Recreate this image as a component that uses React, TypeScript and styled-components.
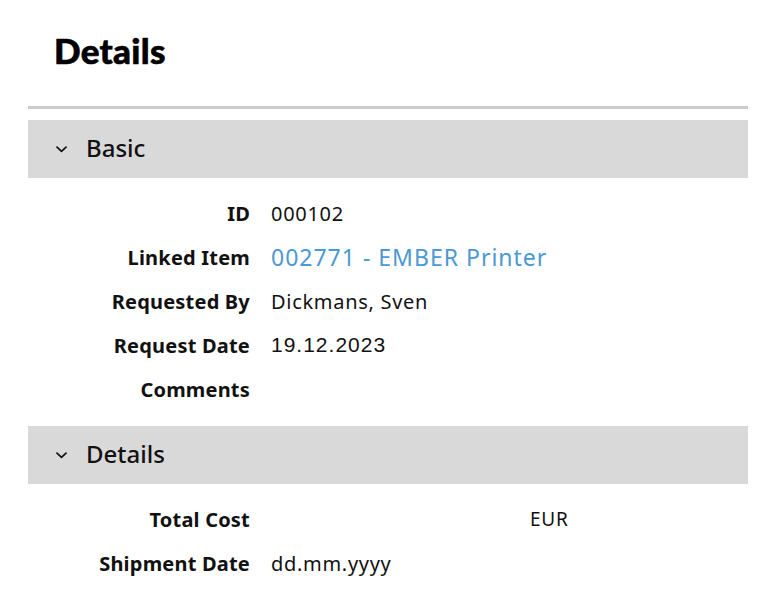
import React from "react";
import styled, { createGlobalStyle } from "styled-components";

const Global = createGlobalStyle`
  html, body { margin: 0; padding: 0; background: #ffffff; }
  body { font-family: "Noto Sans", "Liberation Sans", sans-serif; color: #111; }
`;

const Page = styled.div`
  padding: 0 32px 0 28px;
`;

const TitleBar = styled.div`
  padding: 30px 0 36px 26px;
  margin-bottom: 11px;
  border-bottom: 3px solid #cbcbcb;
`;

const Title = styled.h1`
  margin: 0;
  font-family: Lato, "Noto Sans", sans-serif;
  font-weight: 900;
  font-size: 35px;
  line-height: 40px;
  letter-spacing: 0.3px;
  color: #000;
  -webkit-text-stroke: 0.6px #000;
`;

const Section = styled.section``;

const SectionHeader = styled.div`
  height: 58px;
  background: #d9d9d9;
  display: flex;
  align-items: center;
  padding-left: 28px;
  gap: 19px;
`;

const SectionTitle = styled.span`
  font-size: 24px;
  font-weight: 500;
  line-height: 30px;
  margin-top: -3px;
  color: #111;
`;

const Rows = styled.div`
  padding: 14px 0;
  display: flex;
  flex-direction: column;
`;

const Row = styled.div`
  display: grid;
  grid-template-columns: 222px 1fr;
  column-gap: 20px;
  height: 44px;
  align-items: center;
  margin-top: -1px;
  margin-bottom: 1px;
`;

const Label = styled.div`
  text-align: right;
  font-size: 20px;
  font-weight: 700;
  letter-spacing: 0.2px;
  color: #111;
  white-space: nowrap;
`;

type Variant = "text" | "link" | "date";

const Value = styled.div<{ $variant?: Variant }>`
  white-space: nowrap;
  color: ${(p) => (p.$variant === "link" ? "#4a98d6" : "#111")};
  font-family: ${(p) =>
    p.$variant === "date" ? `"Liberation Sans", Arial, sans-serif` : `"Noto Sans", sans-serif`};
  font-size: ${(p) => (p.$variant === "link" ? "23px" : p.$variant === "date" ? "21px" : "20px")};
  letter-spacing: ${(p) => (p.$variant === "link" ? "1px" : p.$variant === "date" ? "1px" : "0.7px")};
  padding-left: 1px;
`;

const Currency = styled.div`
  padding-left: 260px;
  font-size: 19px;
  letter-spacing: 0.8px;
  color: #111;
`;

const Chevron = () => (
  <svg width="11" height="7" viewBox="0 0 11 7" fill="none">
    <path d="M1 1.2 L5.5 5.4 L10 1.2" stroke="#111" strokeWidth="1.7" strokeLinecap="round" strokeLinejoin="round" />
  </svg>
);

export default function App() {
  return (
    <>
      <Global />
      <Page>
        <TitleBar>
          <Title>Details</Title>
        </TitleBar>
        <Section>
          <SectionHeader>
            <Chevron />
            <SectionTitle>Basic</SectionTitle>
          </SectionHeader>
          <Rows>
            <Row>
              <Label>ID</Label>
              <Value>000102</Value>
            </Row>
            <Row>
              <Label>Linked Item</Label>
              <Value $variant="link">002771 - EMBER Printer</Value>
            </Row>
            <Row>
              <Label>Requested By</Label>
              <Value>Dickmans, Sven</Value>
            </Row>
            <Row>
              <Label>Request Date</Label>
              <Value $variant="date">19.12.2023</Value>
            </Row>
            <Row>
              <Label>Comments</Label>
              <Value />
            </Row>
          </Rows>
        </Section>
        <Section>
          <SectionHeader>
            <Chevron />
            <SectionTitle>Details</SectionTitle>
          </SectionHeader>
          <Rows>
            <Row>
              <Label>Total Cost</Label>
              <Currency>EUR</Currency>
            </Row>
            <Row>
              <Label>Shipment Date</Label>
              <Value>dd.mm.yyyy</Value>
            </Row>
          </Rows>
        </Section>
      </Page>
    </>
  );
}
